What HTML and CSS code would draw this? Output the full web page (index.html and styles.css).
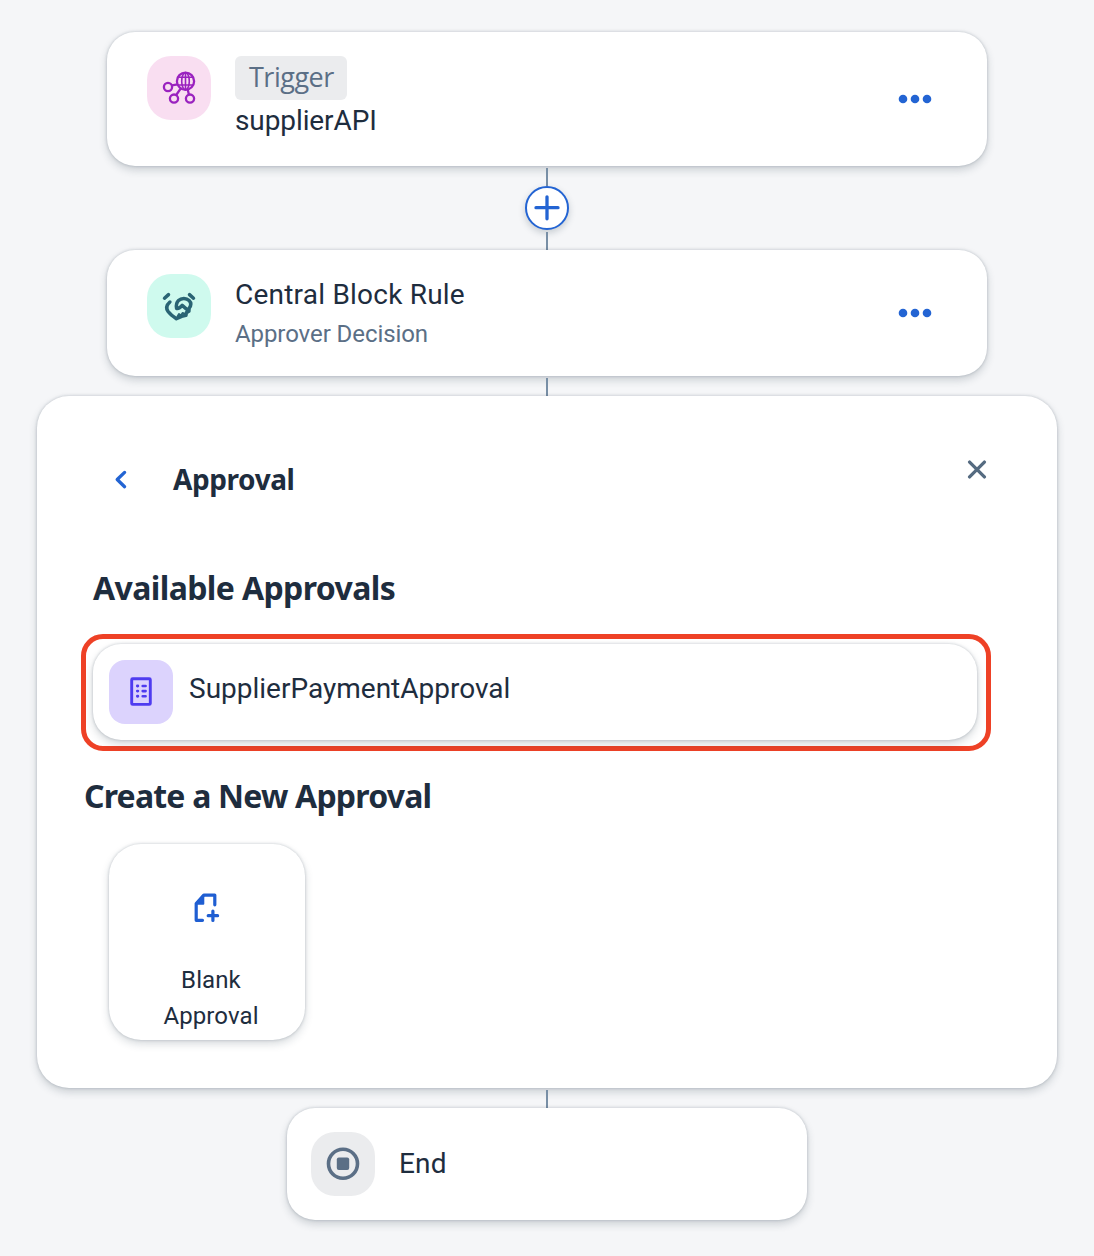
FILE: index.html
```html
<!DOCTYPE html>
<html lang="en">
<head>
<meta charset="utf-8">
<title>Process flow</title>
<link rel="stylesheet" href="styles.css">
</head>
<body>
<main class="flow">
  <section class="card step trigger">
    <div class="tile tile-pink">
      <svg width="48" height="48" viewBox="0 0 48 48" fill="none" stroke="#9a22bf" stroke-width="2.3">
        <circle cx="30.5" cy="17.2" r="8.6"/>
        <ellipse cx="30.5" cy="17.2" rx="3.8" ry="8.6" stroke-width="1.6"/>
        <path d="M30.5 8.5v17.4M22.8 13.2h15.4M22.8 21h15.4" stroke-width="1.6"/>
        <circle cx="13" cy="23" r="4.1"/>
        <circle cx="19" cy="34.6" r="4.1"/>
        <circle cx="35" cy="34.6" r="4.1"/>
        <path d="M17 21.4l5.6-1M21.2 31l4.6-6.6M33.9 30.6l-1.2-5"/>
      </svg>
    </div>
    <div class="step-text">
      <span class="badge">Trigger</span>
      <span class="name name-api">supplierAPI</span>
    </div>
    <button class="more" aria-label="More">
      <svg width="34" height="10" viewBox="0 0 34 10" fill="#2364d3"><circle cx="5" cy="5" r="4.3"/><circle cx="17" cy="5" r="4.3"/><circle cx="29" cy="5" r="4.3"/></svg>
    </button>
  </section>

  <div class="connector connector-add">
    <span class="line"></span>
    <button class="add" aria-label="Add">
      <svg width="26" height="26" viewBox="0 0 26 26" stroke="#2364d3" stroke-width="3.3" stroke-linecap="round"><path d="M2 12.7h22M13 1.8v22"/></svg>
    </button>
    <span class="line"></span>
  </div>

  <section class="card step rule">
    <div class="tile tile-mint">
      <svg width="48" height="48" viewBox="0 0 48 48" fill="none" stroke="#2a6474" stroke-width="3.5" stroke-linecap="round" stroke-linejoin="round">
        <path d="M9.5 16.2l4-3.6M34.5 12.6l4 3.6"/>
        <path d="M14.9 20c-3.4 3-3.9 6.5-1.8 9.5 2 2.7 5 5 8.3 7.2l5.300-2.400 4.200-.9.500-2.800 2.500-1.300.2-3c2-2.600 2.200-5.600 0-7.800-2.700-2.700-7.800-2.700-10.600.1-1.900 1.900-2.500 4.800-1.900 7.800 2.400.3 4-1 5.600-3l4.600 3.900"/>
        <path d="M22.500 34.500l1.500-2.500 2 1.600 1.600-2.600 2 1" stroke-width="2"/>
      </svg>
    </div>
    <div class="step-text">
      <span class="name name-rule">Central Block Rule</span>
      <span class="sub">Approver Decision</span>
    </div>
    <button class="more" aria-label="More">
      <svg width="34" height="10" viewBox="0 0 34 10" fill="#2364d3"><circle cx="5" cy="5" r="4.3"/><circle cx="17" cy="5" r="4.3"/><circle cx="29" cy="5" r="4.3"/></svg>
    </button>
  </section>

  <div class="connector"><span class="line"></span></div>

  <section class="card panel">
    <header class="panel-head">
      <button class="back" aria-label="Back">
        <svg width="14" height="20" viewBox="0 0 14 20" fill="none" stroke="#2364d3" stroke-width="3.3" stroke-linecap="round" stroke-linejoin="round"><path d="M11.6 2.4L4.2 9.5l7.4 7.2"/></svg>
      </button>
      <h1>Approval</h1>
      <button class="close" aria-label="Close">
        <svg width="20" height="20" viewBox="0 0 20 20" stroke="#556b81" stroke-width="3.3" stroke-linecap="round"><path d="M2.6 2.1l14.8 14.8M17.4 2.1L2.6 16.9"/></svg>
      </button>
    </header>
    <h2 class="available">Available Approvals</h2>
    <div class="highlight">
      <div class="option">
        <div class="tile tile-violet">
          <svg width="24" height="30" viewBox="0 0 24 30" fill="none" stroke="#4f3cf0" stroke-width="2.9" stroke-linejoin="round" stroke-linecap="round">
            <rect x="2.7" y="1.8" width="18.6" height="25.6" rx="1"/>
            <path d="M8.4 9h.4M8.4 14.1h.4M8.4 19.3h.4"/>
            <path d="M13.7 9h2.9M13.7 14.1h2.9M13.7 19.3h2.9" stroke-width="2.6"/>
          </svg>
        </div>
        <span class="name name-option">SupplierPaymentApproval</span>
      </div>
    </div>
    <h2 class="create">Create a New Approval</h2>
    <div class="blank">
      <svg width="28" height="32" viewBox="0 0 28 32" fill="none" stroke="#1f5ed2" stroke-width="3.2" stroke-linecap="round" stroke-linejoin="round">
        <path d="M9.5 28.3H3.2V11.5l7.6-8.4h11v9.7"/>
        <path d="M3.7 11.7h6.6V4z" fill="#1f5ed2" stroke-width="2"/>
        <path d="M15.2 23.7h9.4M19.9 19v9.4"/>
      </svg>
      <span class="blank-label"><span>Blank</span><span>Approval</span></span>
    </div>
  </section>

  <div class="connector"><span class="line"></span></div>

  <section class="card end">
    <div class="tile tile-grey">
      <svg width="34" height="34" viewBox="0 0 34 34"><circle cx="17" cy="16.8" r="14.5" fill="none" stroke="#5b6f86" stroke-width="3.6"/><rect x="10.8" y="10.6" width="12.4" height="12.4" rx="2" fill="#5b6f86"/></svg>
    </div>
    <span class="name name-end">End</span>
  </section>
</main>
</body>
</html>
```
FILE: styles.css
```css
* { box-sizing: border-box; }
body {
  margin: 0;
  background: #f5f6f8;
  color: #1e2d3e;
  font-family: Roboto, "Liberation Sans", sans-serif;
}
button { border: 0; padding: 0; background: none; display: flex; }
svg { display: block; flex: none; }
h1, h2 { margin: 0; font-family: "Noto Sans", sans-serif; font-weight: 700; white-space: nowrap; }

.flow { display: flex; flex-direction: column; align-items: center; padding-top: 32px; height: 1256px; }
.card {
  background: #fff;
  border-radius: 28px;
  box-shadow: 0 0 3px rgba(34, 53, 72, .25), 0 4px 8px rgba(34, 53, 72, .2);
}
.step { display: flex; width: 880px; padding: 24px 55px 0 40px; }
.trigger { height: 134px; }
.rule { height: 126px; }
.tile { width: 64px; height: 64px; border-radius: 24px; display: flex; align-items: center; justify-content: center; flex: none; }
.tile-pink { background: #f9def1; }
.tile-mint { background: #cffaee; }
.tile-violet { background: #dcd3fd; border-radius: 16px; }
.tile-grey { background: #ebecee; }

.step-text { display: flex; flex-direction: column; align-items: flex-start; margin-left: 24px; flex: 1; white-space: nowrap; }
.badge {
  width: 112px; height: 44px; border-radius: 6px;
  background: #ebecee; color: #5b6f86;
  font: 500 27px/42px "Open Sans", sans-serif;
  letter-spacing: -.5px;
  padding-left: 14px;
}
.name { font-size: 28px; line-height: 40px; white-space: nowrap; }
.name-api { margin-top: 1px; letter-spacing: -.1px; }
.name-rule { margin-top: 1px; letter-spacing: .22px; }
.sub { font-size: 24px; line-height: 36px; color: #5b6f86; margin-top: 1px; letter-spacing: -.08px; }
.more { align-self: flex-start; }
.trigger .more { margin-top: 38px; }
.rule .more { margin-top: 34px; }

.connector { display: flex; flex-direction: column; align-items: center; padding-top: 2px; height: 20px; }
.line { width: 2px; height: 18px; background: #788fa6; }
.connector-add { height: 84px; }
.add {
  width: 44px; height: 44px; margin-bottom: 2px;
  border: 2px solid #2364d3; border-radius: 50%; background: #fff;
  align-items: center; justify-content: center;
  box-shadow: 0 3px 7px rgba(34, 53, 72, .22);
}

.panel { width: 1020px; height: 692px; border-radius: 32px; padding: 60px 66px 0 44px; display: flex; flex-direction: column; align-items: flex-start; }
.panel-head { display: flex; align-items: flex-start; width: 100%; height: 100px; padding: 0 4px 0 32px; }
.back { margin-top: 14px; }
h1 { flex: 1; margin-left: 46px; font-size: 28px; line-height: 46px; letter-spacing: -.4px; }
.close { margin-top: 4px; }
h2 { font-size: 32px; line-height: 44px; }
.available { margin: 10px 0 0 12px; letter-spacing: -.61px; }
.highlight { width: 910px; height: 117px; margin-top: 24px; padding: 5px 9px 6px 7px; border: 5px solid #ee4126; border-radius: 22px; }
.option {
  display: flex; height: 96px; padding: 16px; border-radius: 28px; background: #fff;
  box-shadow: 0 0 3px rgba(34, 53, 72, .25), 0 4px 8px rgba(34, 53, 72, .2);
}
.name-option { margin: 9px 0 0 16px; }
.create { margin: 23px 0 0 3px; letter-spacing: -.8px; }
.blank {
  display: flex; flex-direction: column; align-items: center;
  width: 196px; height: 196px; margin: 26px 0 0 28px; padding-top: 48px; border-radius: 32px;
  box-shadow: 0 0 3px rgba(34, 53, 72, .25), 0 4px 8px rgba(34, 53, 72, .18);
}
.blank-label { display: flex; flex-direction: column; align-items: center; margin: 38px 0 0 8px; font-size: 24px; line-height: 36px; letter-spacing: .1px; }

.end { display: flex; width: 520px; height: 112px; padding: 24px; }
.name-end { margin: 12px 0 0 24px; letter-spacing: .2px; }
```
